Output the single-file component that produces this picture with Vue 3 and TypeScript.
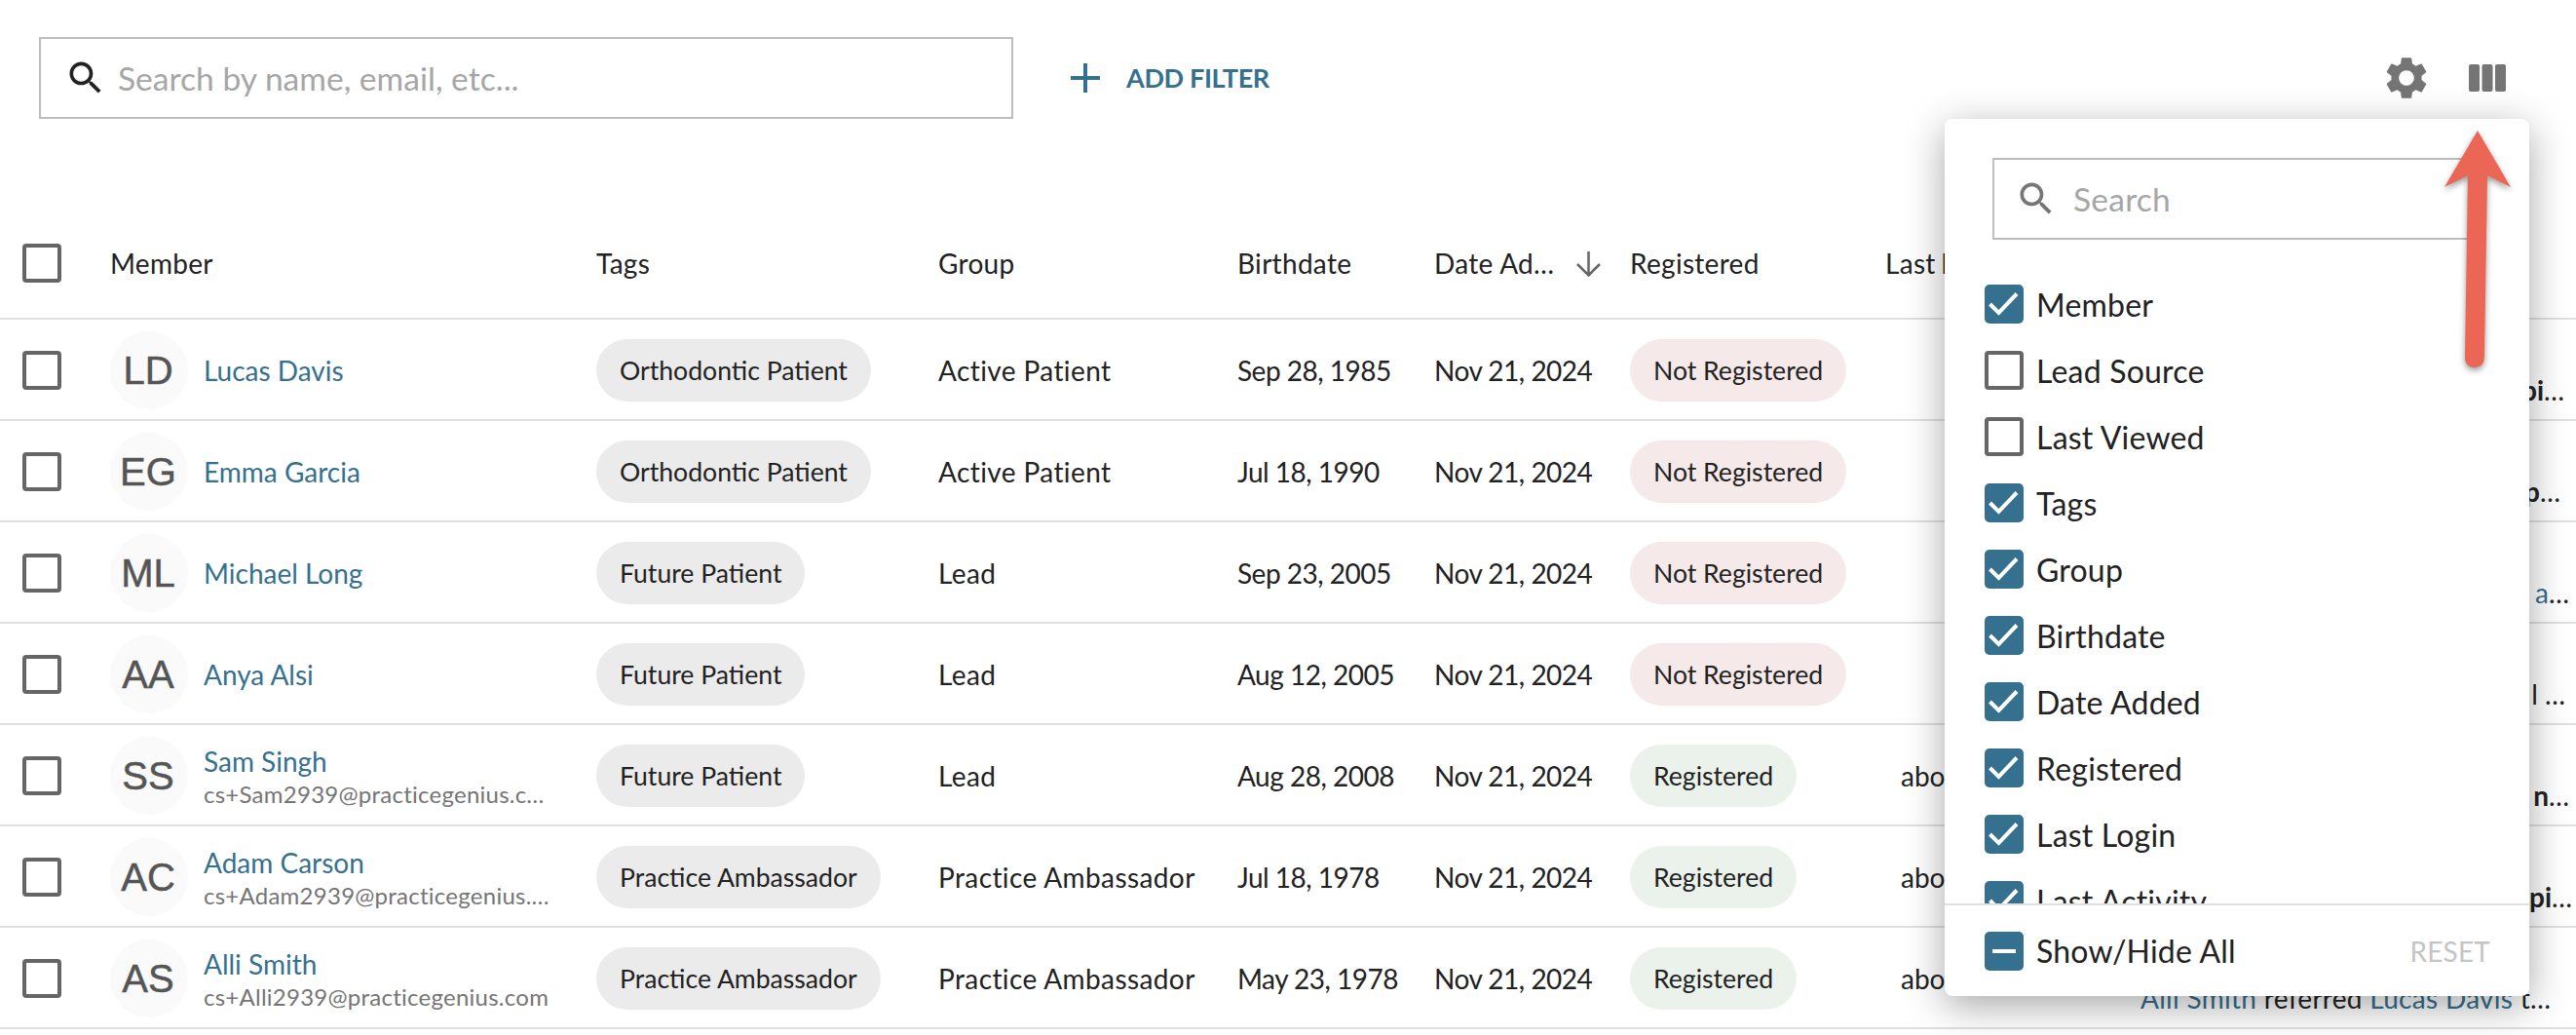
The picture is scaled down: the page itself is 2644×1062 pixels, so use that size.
<script setup lang="ts">
interface Part {
  text: string
  kind: 'b' | 'a' | 't'
}

interface Row {
  initials: string
  name: string
  email?: string
  tag: string
  group: string
  birth: string
  registered: boolean
  login?: string
  activity: Part[]
  end: number
  full?: boolean
}

const rows: Row[] = [
  { initials: 'LD', name: 'Lucas Davis', tag: 'Orthodontic Patient', group: 'Active Patient', birth: 'Sep 28, 1985', registered: false, end: 12,
    activity: [{ text: 'Lucas Davis joined the program and pi', kind: 'b' }] },
  { initials: 'EG', name: 'Emma Garcia', tag: 'Orthodontic Patient', group: 'Active Patient', birth: 'Jul 18, 1990', registered: false, end: 16,
    activity: [{ text: 'Emma Garcia joined the program and p', kind: 'b' }] },
  { initials: 'ML', name: 'Michael Long', tag: 'Future Patient', group: 'Lead', birth: 'Sep 23, 2005', registered: false, end: 7,
    activity: [{ text: 'Alli Smith', kind: 'a' }, { text: ' referred ', kind: 't' }, { text: 'Michael Long a', kind: 'a' }] },
  { initials: 'AA', name: 'Anya Alsi', tag: 'Future Patient', group: 'Lead', birth: 'Aug 12, 2005', registered: false, end: 11,
    activity: [{ text: 'Anya Alsi was added by the staff l ', kind: 't' }] },
  { initials: 'SS', name: 'Sam Singh', email: 'cs+Sam2939@practicegenius.com', tag: 'Future Patient', group: 'Lead', birth: 'Aug 28, 2008', registered: true, login: 'about 1 month ago', end: 7,
    activity: [{ text: 'Sam Singh joined the program n', kind: 'b' }] },
  { initials: 'AC', name: 'Adam Carson', email: 'cs+Adam2939@practicegenius.com', tag: 'Practice Ambassador', group: 'Practice Ambassador', birth: 'Jul 18, 1978', registered: true, login: 'about 1 month ago', end: 4,
    activity: [{ text: 'Adam Carson joined the program pi', kind: 'b' }] },
  { initials: 'AS', name: 'Alli Smith', email: 'cs+Alli2939@practicegenius.com', tag: 'Practice Ambassador', group: 'Practice Ambassador', birth: 'May 23, 1978', registered: true, login: 'about 1 month ago', end: 0, full: true,
    activity: [{ text: 'Alli Smith', kind: 'a' }, { text: ' referred ', kind: 't' }, { text: 'Lucas Davis', kind: 'a' }, { text: ' t', kind: 't' }] },
]

const columns: { label: string; on: boolean }[] = [
  { label: 'Member', on: true },
  { label: 'Lead Source', on: false },
  { label: 'Last Viewed', on: false },
  { label: 'Tags', on: true },
  { label: 'Group', on: true },
  { label: 'Birthdate', on: true },
  { label: 'Date Added', on: true },
  { label: 'Registered', on: true },
  { label: 'Last Login', on: true },
  { label: 'Last Activity', on: true },
]

const searchPath =
  'M15.5 14h-.79l-.28-.27C15.41 12.59 16 11.11 16 9.5 16 5.91 13.09 3 9.5 3S3 5.91 3 9.5 5.91 16 9.5 16c1.61 0 3.09-.59 4.23-1.57l.27.28v.79l5 4.99L20.49 19l-4.99-5zm-6 0C7.01 14 5 11.99 5 9.5S7.01 5 9.5 5 14 7.01 14 9.5 11.99 14 9.5 14z'
const gearPath =
  'M19.14,12.94c0.04-0.3,0.06-0.61,0.06-0.94c0-0.32-0.02-0.64-0.07-0.94l2.03-1.58c0.18-0.14,0.23-0.41,0.12-0.61 l-1.92-3.32c-0.12-0.22-0.37-0.29-0.59-0.22l-2.39,0.96c-0.5-0.38-1.03-0.7-1.62-0.94L14.4,2.81c-0.04-0.24-0.24-0.41-0.48-0.41 h-3.84c-0.24,0-0.43,0.17-0.47,0.41L9.25,5.35C8.66,5.59,8.12,5.92,7.63,6.29L5.24,5.33c-0.22-0.08-0.47,0-0.59,0.22L2.74,8.87 C2.62,9.08,2.66,9.34,2.86,9.48l2.03,1.58C4.84,11.36,4.8,11.69,4.8,12s0.02,0.64,0.07,0.94l-2.03,1.58 c-0.18,0.14-0.23,0.41-0.12,0.61l1.92,3.32c0.12,0.22,0.37,0.29,0.59,0.22l2.39-0.96c0.5,0.38,1.03,0.7,1.62,0.94l0.36,2.54 c0.05,0.24,0.24,0.41,0.48,0.41h3.84c0.24,0,0.44-0.17,0.47-0.41l0.36-2.54c0.59-0.24,1.13-0.56,1.62-0.94l2.39,0.96 c0.22,0.08,0.47,0,0.59-0.22l1.92-3.32c0.12-0.22,0.07-0.47-0.12-0.61L19.14,12.94z M12,15.6c-1.98,0-3.6-1.62-3.6-3.6 s1.62-3.6,3.6-3.6s3.6,1.62,3.6,3.6S13.98,15.6,12,15.6z'
</script>

<template>
  <div class="page">
    <header class="toolbar">
      <div class="search main-search">
        <svg class="search-icon" viewBox="0 0 24 24"><path :d="searchPath" /></svg>
        <span class="placeholder">Search by name, email, etc...</span>
      </div>
      <button class="add-filter">
        <svg class="plus" viewBox="0 0 30 30"><path d="M15 0v30M0 15h30" /></svg>
        <span class="add-label">ADD FILTER</span>
      </button>
      <div class="tools">
        <svg class="gear" viewBox="0 0 24 24"><path :d="gearPath" /></svg>
        <svg class="cols" viewBox="0 0 38 28">
          <rect x="0" width="11" height="28" rx="2" />
          <rect x="13.500" width="11" height="28" rx="2" />
          <rect x="27" width="11" height="28" rx="2" />
        </svg>
      </div>
    </header>

    <section class="table">
      <div class="grid head">
        <div class="check-cell"><span class="box" /></div>
        <div>Member</div>
        <div>Tags</div>
        <div>Group</div>
        <div>Birthdate</div>
        <div class="sorted">
          <span class="trunc">Date Added</span>
          <svg class="sort" viewBox="0 0 27 27"><path d="M13.5 1v24M2 14l11.500 11.500L25 14" /></svg>
        </div>
        <div>Registered</div>
        <div class="last-login">Last Login</div>
        <div>Last Activity</div>
      </div>

      <div v-for="row in rows" :key="row.initials" class="grid row">
        <div class="check-cell"><span class="box" /></div>
        <div class="member">
          <span class="avatar">{{ row.initials }}</span>
          <div class="who" :class="{ two: row.email }">
            <a class="link name">{{ row.name }}</a>
            <div v-if="row.email" class="email">{{ row.email }}</div>
          </div>
        </div>
        <div><span class="pill tag">{{ row.tag }}</span></div>
        <div class="group">{{ row.group }}</div>
        <div class="date">{{ row.birth }}</div>
        <div class="date">Nov 21, 2024</div>
        <div>
          <span class="pill" :class="row.registered ? 'yes' : 'no'">{{ row.registered ? 'Registered' : 'Not Registered' }}</span>
        </div>
        <div class="login">{{ row.login }}</div>
        <div class="activity">
          <div class="when">Nov 21, 2024</div>
          <div class="what" :class="{ full: row.full }" :style="{ paddingRight: row.end + 'px' }">
            <template v-for="part in row.activity" :key="part.text">
              <strong v-if="part.kind === 'b'">{{ part.text }}</strong>
              <a v-else-if="part.kind === 'a'" class="link">{{ part.text }}</a>
              <span v-else>{{ part.text }}</span>
            </template>
            <span>…</span>
          </div>
        </div>
      </div>
    </section>

    <aside class="popover">
      <div class="search pop-search">
        <svg class="search-icon gray" viewBox="0 0 24 24"><path :d="searchPath" /></svg>
        <span class="placeholder">Search</span>
      </div>
      <ul class="col-list">
        <li v-for="col in columns" :key="col.label">
          <span v-if="col.on" class="box on">
            <svg viewBox="0 0 40 40"><path d="M5.500 20l9 9L33 9.500" /></svg>
          </span>
          <span v-else class="box" />
          <span>{{ col.label }}</span>
        </li>
      </ul>
      <footer class="pop-foot">
        <span class="box on">
          <svg viewBox="0 0 40 40"><path d="M8 20h24" /></svg>
        </span>
        <span>Show/Hide All</span>
        <span class="reset">RESET</span>
      </footer>
    </aside>

    <svg class="callout" viewBox="0 0 90 260">
      <path d="M44 4 L78 62 L54 50 L51 236 Q50.500 247 41 247 Q31 247 31 236 L34 50 L10 62 Z" />
    </svg>
  </div>
</template>

<style>
html,
body {
  margin: 0;
  background: #fff;
  overflow: hidden;
}
</style>

<style scoped>
.page {
  position: relative;
  width: 2644px;
  height: 1062px;
  overflow: hidden;
  background: #fff;
  color: #222;
  font-family: Lato, "Noto Sans", sans-serif;
  font-size: 28px;
}

.toolbar {
  display: flex;
  align-items: center;
  padding: 38px 72px 90px 40px;
}

.search {
  display: flex;
  align-items: center;
  box-sizing: border-box;
  height: 84px;
  border: 2px solid #bdbdbd;
}

.main-search {
  width: 1000px;
  padding-left: 24px;
}

.pop-search {
  margin-left: 49px;
  width: 504px;
  padding-left: 21px;
}

.search-icon {
  width: 44px;
  height: 44px;
  fill: #222;
  flex: none;
  margin-right: 11px;
}

.search-icon.gray {
  fill: #757575;
  margin-right: 16px;
}

.placeholder {
  color: #a6a6a6;
  font-size: 33.600px;
}

.add-filter {
  display: flex;
  align-items: center;
  gap: 27px;
  margin-left: 59px;
  padding: 0;
  border: 0;
  background: none;
  font: inherit;
  font-size: 27px;
  font-weight: 700;
  letter-spacing: -0.35px;
  color: #36708f;
}

.add-label {
  padding-bottom: 2px;
}

.plus {
  width: 30px;
  height: 30px;
  fill: none;
  stroke: #36708f;
  stroke-width: 4;
}

.tools {
  display: flex;
  align-items: center;
  gap: 38px;
  margin-left: auto;
}

.gear {
  width: 52px;
  height: 52px;
  fill: #757575;
}

.cols {
  width: 38px;
  height: 28px;
  fill: #757575;
}

.grid {
  display: grid;
  grid-template-columns: 113px 499px 351px 307px 202px 201px 262px 262px 447px;
  align-items: center;
  box-sizing: border-box;
  border-bottom: 2px solid #e0e0e0;
}

.head {
  height: 116px;
  padding-top: 2px;
  letter-spacing: 0.3px;
}

.last-login {
  word-spacing: -2px;
}

.row {
  height: 104px;
  padding-top: 2px;
}

.check-cell {
  display: flex;
  padding-left: 23px;
}

.box {
  display: block;
  flex: none;
  box-sizing: border-box;
  width: 40px;
  height: 40px;
  border: 4px solid #666;
  border-radius: 4px;
  background: #fff;
}

.box.on {
  border: 0;
  border-radius: 5px;
  background: #36708f;
}

.box svg {
  display: block;
  width: 40px;
  height: 40px;
  fill: none;
  stroke: #fff;
  stroke-width: 4;
}

.sorted {
  display: flex;
  align-items: center;
  gap: 16px;
  padding-right: 29px;
}

.trunc {
  flex: 1;
  min-width: 0;
  overflow: hidden;
  white-space: nowrap;
  text-overflow: ellipsis;
}

.sort {
  flex: none;
  width: 27px;
  height: 27px;
  fill: none;
  stroke: #666;
  stroke-width: 2.500;
}

.member {
  display: flex;
  align-items: center;
  gap: 16px;
}

.avatar {
  display: flex;
  flex: none;
  align-items: center;
  justify-content: center;
  box-sizing: border-box;
  width: 80px;
  height: 80px;
  padding-right: 2px;
  border-radius: 50%;
  background: #fafafa;
  color: #555;
  font-family: "Liberation Sans", sans-serif;
  font-size: 40px;
  -webkit-text-stroke: 0.5px #555;
}

.who {
  min-width: 0;
}

.who.two {
  padding-top: 2px;
}

.link {
  color: #36708f;
}

.name {
  display: block;
  line-height: 36px;
}

.email {
  width: 362px;
  overflow: hidden;
  color: #757575;
  font-size: 24px;
  letter-spacing: 0.25px;
  line-height: 32px;
  white-space: nowrap;
  text-overflow: ellipsis;
}

.pill {
  display: inline-flex;
  align-items: center;
  height: 64px;
  padding: 0 24px;
  border-radius: 32px;
  font-size: 26.600px;
  white-space: nowrap;
}

.tag {
  background: #ebebeb;
}

.no {
  background: #f5e9e9;
}

.yes {
  background: #ebf2eb;
}

.group {
  letter-spacing: 0.4px;
}

.date {
  letter-spacing: -0.5px;
}

.login {
  padding-left: 16px;
  white-space: nowrap;
}

.activity {
  min-width: 0;
  line-height: 36px;
}

.when {
  height: 36px;
  margin-bottom: 4px;
}

.what {
  display: flex;
  justify-content: flex-end;
  overflow: hidden;
  white-space: pre;
}

.what.full {
  justify-content: flex-start;
  letter-spacing: 0.3px;
}

.popover {
  position: absolute;
  top: 122px;
  left: 1996px;
  display: flex;
  flex-direction: column;
  width: 600px;
  height: 900px;
  padding-top: 40px;
  box-sizing: border-box;
  border-radius: 8px;
  background: #fff;
  box-shadow: 0 10px 40px rgba(0, 0, 0, 0.35);
  font-size: 32px;
  letter-spacing: 0.2px;
}

.col-list {
  flex: 1;
  min-height: 0;
  margin: 0;
  padding: 32px 0 0 41px;
  overflow: hidden;
  list-style: none;
}

.col-list li {
  display: flex;
  align-items: center;
  gap: 13px;
  height: 68px;
}

.pop-foot {
  display: flex;
  flex: none;
  align-items: center;
  gap: 13px;
  box-sizing: border-box;
  height: 95px;
  padding: 0 40px 0 41px;
  border-top: 2px solid #e0e0e0;
}

.reset {
  margin-left: auto;
  color: #c4c4c4;
  font-size: 28px;
}

.callout {
  position: absolute;
  top: 130px;
  left: 2499px;
  width: 90px;
  height: 260px;
  fill: #ec6655;
  filter: drop-shadow(0 3px 3px rgba(0, 0, 0, 0.4));
}
</style>
